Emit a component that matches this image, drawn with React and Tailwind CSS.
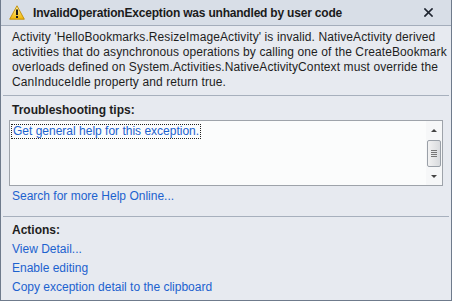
import React from 'react';

const font = { fontFamily: '"Segoe UI", "Liberation Sans", Arial, sans-serif' };

const WarningIcon = () => (
  <svg width="16" height="15" viewBox="0 0 16 15">
    <defs>
      <linearGradient id="wg" x1="0" y1="0" x2="0" y2="1">
        <stop offset="0" stopColor="#fff3a0" />
        <stop offset="1" stopColor="#f2b705" />
      </linearGradient>
    </defs>
    <path d="M8 0.8 L15.3 14.2 L0.7 14.2 Z" fill="url(#wg)" stroke="#c08a00" strokeWidth="0.9" strokeLinejoin="round" />
    <rect x="7" y="4.5" width="2" height="5.5" fill="#1a1a1a" />
    <rect x="7" y="11" width="2" height="2" fill="#1a1a1a" />
  </svg>
);

const CloseIcon = () => (
  <svg width="9" height="9" viewBox="0 0 9 9">
    <path d="M1 1 L8 8 M8 1 L1 8" stroke="#1f2530" strokeWidth="1.7" strokeLinecap="square" />
  </svg>
);

const Scrollbar = () => (
  <div className="w-[16px] h-full flex flex-col items-center justify-between py-[4px] bg-[#f6f7f8]">
    <span className="w-0 h-0 border-l-[3px] border-r-[3px] border-b-[3px] border-l-transparent border-r-transparent border-b-[#444] mt-[4px]" />
    <div className="w-[14px] h-[27px] border border-[#9aa0a8] rounded-[2px] bg-gradient-to-r from-[#f2f2f2] to-[#d9dbde] flex flex-col items-center justify-center gap-[1px]">
      <span className="block w-[6px] h-px bg-[#777]" />
      <span className="block w-[6px] h-px bg-[#777]" />
      <span className="block w-[6px] h-px bg-[#777]" />
      <span className="block w-[6px] h-px bg-[#777]" />
    </div>
    <span className="w-0 h-0 border-l-[3px] border-r-[3px] border-t-[3px] border-l-transparent border-r-transparent border-t-[#444] mb-[3px]" />
  </div>
);

export default function App() {
  return (
    <div style={font} className="w-[452px] h-[301px] bg-[#e7eaf0] border-l border-r border-b border-[#6f7b8c] text-[12px] text-[#1e1e1e] flex flex-col overflow-hidden">
      {/* title bar */}
      <div className="h-[26px] bg-[#d8dee7] border-b border-[#a4adbb] flex items-center pl-[8px] pr-[18px] shrink-0">
        <WarningIcon />
        <span className="ml-[8px] font-bold text-[12px] tracking-[-0.2px] text-[#1b1b1b] flex-1 leading-none">InvalidOperationException was unhandled by user code</span>
        <CloseIcon />
      </div>

      {/* message */}
      <div className="px-[11px] pt-[4px] leading-[15px] tracking-[0.1px] h-[69px] shrink-0 whitespace-nowrap">
        Activity 'HelloBookmarks.ResizeImageActivity' is invalid. NativeActivity derived<br />
        activities that do asynchronous operations by calling one of the CreateBookmark<br />
        overloads defined on System.Activities.NativeActivityContext must override the<br />
        CanInduceIdle property and return true.
      </div>

      <div className="mx-[2px] border-t border-[#a7b0bd]" />

      {/* troubleshooting */}
      <div className="px-[11px] pt-[7px] font-bold leading-[15px]">Troubleshooting tips:</div>
      <div className="mx-[8px] mt-[2px] h-[66px] border border-[#9ea3aa] bg-[#fbfcfc] flex">
        <div className="flex-1 pl-[1px] pt-px">
          <span className="inline-block border border-dotted border-[#222] px-px leading-[13px] text-[#1c62cf]">Get general help for this exception.</span>
        </div>
        <Scrollbar />
      </div>
      <div className="px-[11px] pt-[3px] leading-[15px] text-[#1c62cf]">Search for more Help Online...</div>

      <div className="mx-[2px] mt-[12px] border-t border-[#a7b0bd]" />

      {/* actions */}
      <div className="px-[11px] pt-[6px] font-bold leading-[15px]">Actions:</div>
      <div className="px-[11px] pt-[4px] flex flex-col gap-[4px] leading-[15px] text-[#1c62cf]">
        <span>View Detail...</span>
        <span>Enable editing</span>
        <span>Copy exception detail to the clipboard</span>
      </div>
    </div>
  );
}
